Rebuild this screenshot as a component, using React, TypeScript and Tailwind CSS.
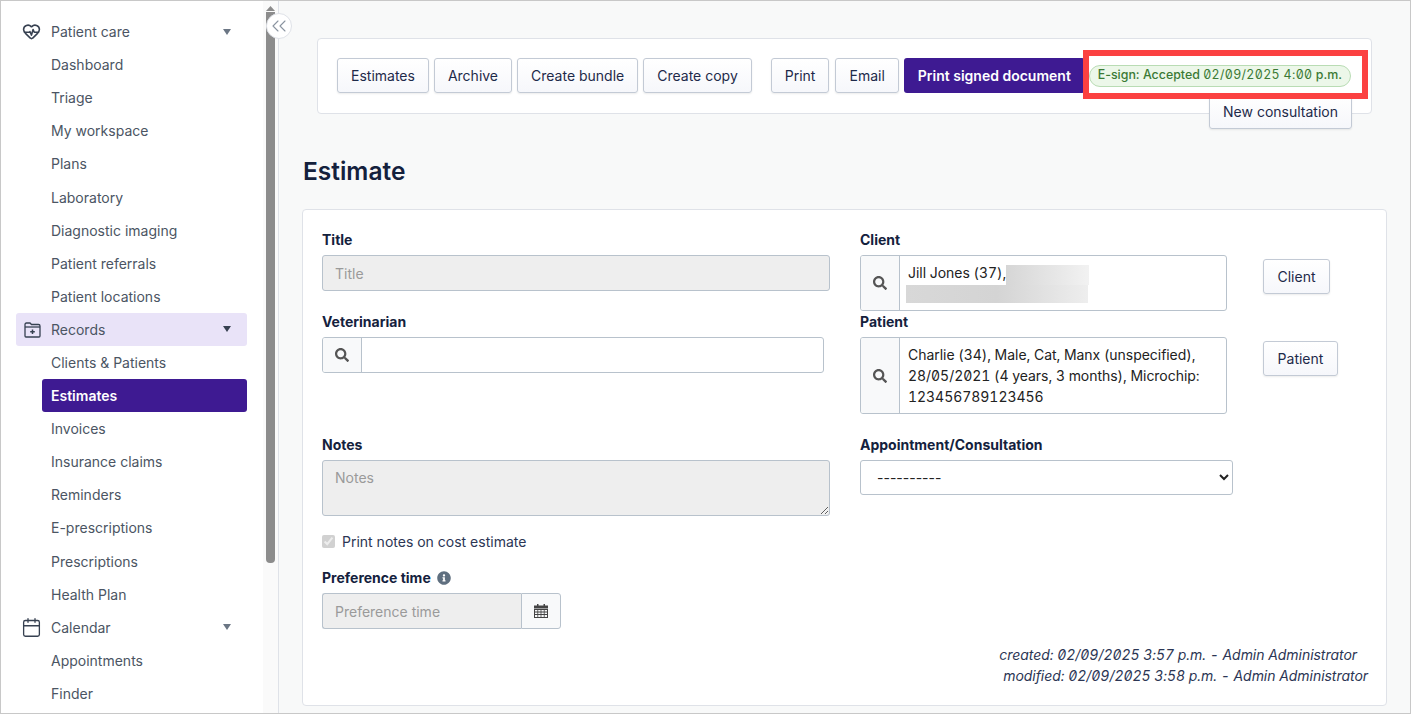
import { Calendar, ChevronsLeft, HeartPulse } from 'lucide-react'
import { FaInfoCircle, FaSearch } from 'react-icons/fa'

const carePages = ['Dashboard', 'Triage', 'My workspace', 'Plans', 'Laboratory', 'Diagnostic imaging', 'Patient referrals', 'Patient locations']
const recordPages = ['Clients & Patients', 'Estimates', 'Invoices', 'Insurance claims', 'Reminders', 'E-prescriptions', 'Prescriptions', 'Health Plan']
const calendarPages = ['Appointments', 'Finder']

const btn = 'h-[35px] px-[13px] bg-gradient-to-b from-white to-[#f6f7fb] border border-[#c3cad5] rounded-[3px] text-[14px] text-[#1e2a4a] shadow-[0_1px_2px_rgba(0,0,0,0.08)] whitespace-nowrap'
const label = 'block text-[14px] font-bold text-[#14213d] leading-4'
const disabledInput = 'bg-[#eeeeee] border border-[#b8c2cc] rounded-[3px] text-[14px] px-3 placeholder:text-[#9a9a9a]'

function FolderIcon() {
  return (
    <svg width="17" height="17" viewBox="0 0 17 17" fill="none" stroke="#374151" strokeWidth="1.3">
      <path d="M1 15V3.5C1 2.7 1.6 2 2.4 2H6l1.5 1.5h7c.8 0 1.5.6 1.5 1.4V15c0 .6-.4 1-1 1H2c-.6 0-1-.4-1-1Z" />
      <path d="M1 6h15" />
      <path d="M8.5 8.5v4.5M6.2 10.8h4.6" strokeWidth="1.5" />
    </svg>
  )
}

function GridCalendar() {
  return (
    <svg width="14" height="14" viewBox="0 0 14 14" fill="#444">
      <rect x="3" y="0" width="1.5" height="2" />
      <rect x="9.5" y="0" width="1.5" height="2" />
      <rect x="0" y="1.5" width="14" height="3" />
      <path
        fillRule="evenodd"
        d="M0 5h14v9H0ZM1 6v1.5h2.4V6Zm3.2 0v1.5h2.4V6Zm3.2 0v1.5h2.4V6Zm3.2 0v1.5H13V6ZM1 8.4v1.6h2.4V8.4Zm3.2 0v1.6h2.4V8.4Zm3.2 0v1.6h2.4V8.4Zm3.2 0v1.6H13V8.4ZM1 10.9v2.1h2.4v-2.1Zm3.2 0v2.1h2.4v-2.1Zm3.2 0v2.1h2.4v-2.1Zm3.2 0v2.1H13v-2.1Z"
      />
    </svg>
  )
}

function Caret({ dark }: { dark?: boolean }) {
  return (
    <svg width="10" height="6" viewBox="0 0 10 6" className="ml-auto mr-[15px]">
      <path d="M1 0h8L5 6Z" fill={dark ? '#374151' : '#6b7684'} />
    </svg>
  )
}

function NavGroup({ title, icon, pages, active }: { title: string; icon: React.ReactNode; pages: string[]; active?: boolean }) {
  return (
    <>
      <div className={`flex items-center h-[33.1px] rounded-[3px] pl-2 text-[14px] text-[#4b5563] ${active ? 'bg-[#e9e3f8]' : ''}`}>
        <span className="w-[27px] flex items-center">{icon}</span>
        {title}
        <Caret dark={active} />
      </div>
      {pages.map(p => (
        <div
          key={p}
          className={`flex items-center h-[33.1px] ml-[26px] pl-[9px] rounded-[3px] text-[14px] ${
            p === 'Estimates' ? 'bg-[#3e1a92] text-white font-semibold' : 'text-[#4b5563]'
          }`}
        >
          {p}
        </div>
      ))}
    </>
  )
}

function SearchAddon() {
  return (
    <span className="w-[39px] shrink-0 self-stretch flex items-center justify-center bg-[#f8f9fa] border-r border-[#b8c2cc] text-[#555]">
      <FaSearch size={14} />
    </span>
  )
}

export default function App() {
  return (
    <div className="relative h-[714px] w-[1411px] overflow-hidden flex border border-[#c8c8c8] bg-[#f8f9f9] font-['Inter',sans-serif]">
      <aside className="w-[278px] shrink-0 flex bg-white border-r border-[#dfe2e8]">
        <nav className="w-[246px] shrink-0 pt-[14px] pl-[15px]">
          <NavGroup title="Patient care" icon={<HeartPulse size={19} color="#374151" className="-ml-[2px]" />} pages={carePages} />
          <NavGroup title="Records" icon={<FolderIcon />} pages={recordPages} active />
          <NavGroup title="Calendar" icon={<Calendar size={21} strokeWidth={1.5} color="#374151" className="-ml-[3px]" />} pages={calendarPages} />
        </nav>
        <div className="ml-[16px] w-[15px] bg-[#fafafa] px-[3px] pt-[5px]">
          <svg width="9" height="5" viewBox="0 0 9 5" className="block">
            <path d="M4.5 0 9 5H0Z" fill="#8c8c8c" />
          </svg>
          <div className="mt-[1px] h-[551px] bg-[#8c8c8c] rounded-b-[4px]" />
        </div>
      </aside>

      <button className="absolute left-[265px] top-[12px] w-[26px] h-[26px] rounded-full bg-white border border-[#dfe2e8] flex items-center justify-center text-[#8a94a0]">
        <ChevronsLeft size={24} strokeWidth={1.1} />
      </button>

      <main className="flex-1 pl-[23px] pr-[23px] pt-[37px]">
        <div className="ml-[15px] mr-[15px] h-[76px] bg-white border border-[#dfe2e8] rounded-[4px] pl-[19px] pt-[19px]">
          <div className="flex items-center">
            <div className="flex gap-[5px]">
              <button className={btn}>Estimates</button>
              <button className={btn}>Archive</button>
              <button className={btn}>Create bundle</button>
              <button className={btn}>Create copy</button>
            </div>
            <div className="flex gap-[6px] ml-[19px]">
              <button className={btn}>Print</button>
              <button className={btn}>Email</button>
            </div>
            <button className="h-[35px] ml-[5px] px-[14px] bg-[#3e1a92] rounded-[3px] text-[14px] font-semibold text-white whitespace-nowrap">
              Print signed document
            </button>
            <span className="ml-[4px] flex items-center h-[22px] w-[262px] justify-center rounded-full bg-[#ecf7e9] border border-[#b9dcb4] text-[12.4px] font-medium text-[#3b7a35] whitespace-nowrap">
              E-sign: Accepted&nbsp;
              <span className="font-normal tracking-[0.35px] [font-feature-settings:'tnum','zero']">02/09/2025 4:00</span>
              &nbsp;p.m.
            </span>
          </div>
          <div className="flex justify-end pr-[19px] pt-[1px]">
            <button className={btn}>New consultation</button>
          </div>
        </div>

        <h1 className="mt-[41px] ml-[1px] text-[24.5px] leading-8 font-semibold text-[#14213d]">Estimate</h1>

        <section className="mt-[22px] h-[497px] bg-white border border-[#dfe2e8] rounded-[4px] pl-[19px] pt-[22px]">
          <div className="grid grid-cols-[508px_auto] gap-x-[30px] grid-rows-[82px_123px_auto]">
            <div>
              <label className={label}>Title</label>
              <input disabled placeholder="Title" className={`${disabledInput} mt-[7px] h-[36px] w-full block`} />
            </div>
            <div>
              <label className={label}>Client</label>
              <div className="mt-[7px] flex">
                <div className="w-[367px] h-[56px] flex bg-white border border-[#b8c2cc] rounded-[3px] overflow-hidden text-[14px] text-[#222]">
                  <SearchAddon />
                  <div className="pl-2 pt-[6px] leading-[21px] tracking-[-0.04px] [font-feature-settings:'tnum','zero']">
                    <div className="flex">
                      Jill Jones (37),
                      <span className="mt-[3px] w-[83px] h-5 bg-gradient-to-r from-[#d6d6d6] to-[#f2f2f2]" />
                    </div>
                    <div className="-ml-[2px] w-[182px] h-[18px] bg-gradient-to-r from-[#d8d8d8] via-[#d4d4d4] to-[#eeeeee]" />
                  </div>
                </div>
                <button className={`${btn} ml-[36px] mt-[4px] w-[67px]`}>Client</button>
              </div>
            </div>

            <div>
              <label className={label}>Veterinarian</label>
              <div className="mt-[7px] w-[502px] h-9 flex bg-white border border-[#b8c2cc] rounded-[3px] overflow-hidden">
                <SearchAddon />
              </div>
            </div>
            <div>
              <label className={label}>Patient</label>
              <div className="mt-[7px] flex">
                <div className="w-[367px] h-[77px] flex bg-white border border-[#b8c2cc] rounded-[3px] overflow-hidden text-[14px] text-[#222]">
                  <SearchAddon />
                  <div className="pl-2 pt-[6px] leading-[21px] tracking-[-0.04px] [font-feature-settings:'tnum','zero']">
                    Charlie (34), Male, Cat, Manx (unspecified),
                    <br />
                    28/05/2021 (4 years, 3 months), Microchip:
                    <br />
                    123456789123456
                  </div>
                </div>
                <button className={`${btn} ml-[36px] mt-[4px] w-[75px]`}>Patient</button>
              </div>
            </div>

            <div>
              <label className={label}>Notes</label>
              <textarea disabled placeholder="Notes" className={`${disabledInput} mt-[7px] h-[56px] w-full block pt-[6px]`} />
              <div className="mt-[15px] flex items-center text-[14px] text-[#2c3654]">
                <input type="checkbox" checked disabled readOnly className="w-[13px] h-[13px] accent-[#c9c9c9]" />
                <span className="ml-[7px]">Print notes on cost estimate</span>
              </div>
              <label className={`${label} mt-[18px] flex items-center`}>
                Preference time
                <FaInfoCircle size={14} className="ml-[6px] text-[#5f6f7f]" />
              </label>
              <div className="mt-[7px] flex w-[239px] h-[36px]">
                <input disabled placeholder="Preference time" className={`${disabledInput} flex-1 min-w-0 rounded-r-none border-r-0`} />
                <span className="w-[40px] flex items-center justify-center bg-[#f8f9fa] border border-[#b8c2cc] rounded-r-[3px]">
                  <GridCalendar />
                </span>
              </div>
            </div>
            <div>
              <label className={label}>Appointment/Consultation</label>
              <select className="mt-[7px] w-[373px] h-[35px] bg-white border border-[#b8c2cc] rounded-[3px] px-3 text-[14px] text-[#222]">
                <option>----------</option>
              </select>
            </div>
          </div>

          <div className="mt-[15px] pr-[18px] text-right text-[14px] italic text-[#2c3654] leading-[21px] tracking-[-0.04px] [font-feature-settings:'tnum','zero']">
            <div className="pr-[11px]">created: 02/09/2025 3:57 p.m. - Admin Administrator</div>
            <div>modified: 02/09/2025 3:58 p.m. - Admin Administrator</div>
          </div>
        </section>
      </main>

      <div className="absolute left-[1082px] top-[49px] w-[285px] h-[49px] border-[6px] border-[#fb4141] pointer-events-none" />
    </div>
  )
}
